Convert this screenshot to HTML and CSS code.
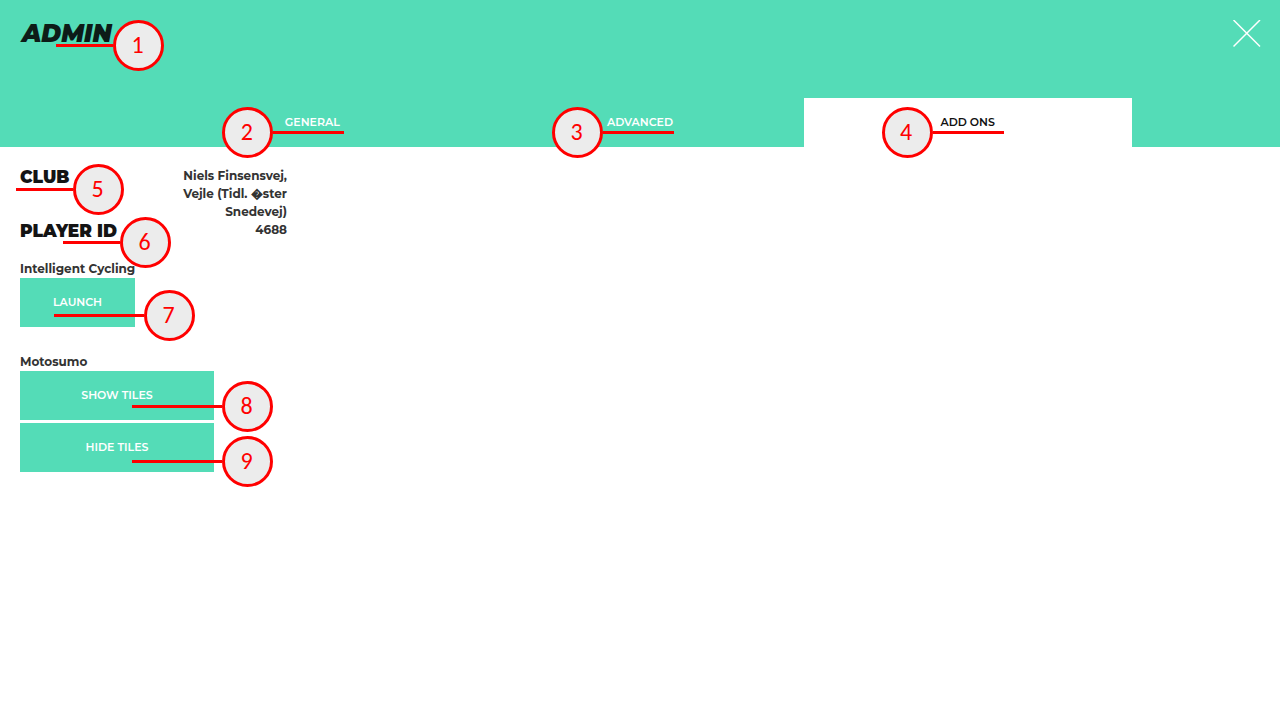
FILE: index.html
```html
<!DOCTYPE html>
<html lang="en">
<head>
<meta charset="utf-8">
<meta name="viewport" content="width=device-width, initial-scale=1">
<title>Admin</title>
<link rel="stylesheet" href="styles.css">
</head>
<body>
<header class="header">
  <div class="title-bar">
    <div class="anchor">
      <h1 class="title">ADMIN</h1>
      <span class="callout callout-title"><span class="number">1</span></span>
    </div>
    <button class="close" type="button" aria-label="Close">
      <svg class="close-icon" viewBox="0 0 28 28" aria-hidden="true"><path d="M0.5 0 27 26.500M27 0 0.5 26.500" fill="none" stroke="#fff" stroke-width="1.5"/></svg>
    </button>
  </div>
  <nav class="tabs">
    <div class="anchor">
      <button class="tab" type="button">GENERAL</button>
      <span class="callout callout-tab callout-general"><span class="number">2</span></span>
    </div>
    <div class="anchor">
      <button class="tab" type="button">ADVANCED</button>
      <span class="callout callout-tab callout-advanced"><span class="number">3</span></span>
    </div>
    <div class="anchor">
      <button class="tab tab-active" type="button" aria-current="page">ADD ONS</button>
      <span class="callout callout-tab callout-addons"><span class="number">4</span></span>
    </div>
  </nav>
</header>
<main class="content">
  <dl class="details">
    <div class="detail anchor">
      <dt class="detail-name">CLUB</dt>
      <dd class="detail-value">Niels Finsensvej,<br>Vejle (Tidl. &#xFFFD;ster<br>Snedevej)</dd>
      <span class="callout callout-club"><span class="number">5</span></span>
    </div>
    <div class="detail anchor">
      <dt class="detail-name">PLAYER ID</dt>
      <dd class="detail-value">4688</dd>
      <span class="callout callout-player"><span class="number">6</span></span>
    </div>
  </dl>
  <section class="addon">
    <h2 class="addon-name">Intelligent Cycling</h2>
    <div class="anchor">
      <button class="action action-launch" type="button">LAUNCH</button>
      <span class="callout callout-action callout-launch"><span class="number">7</span></span>
    </div>
  </section>
  <section class="addon">
    <h2 class="addon-name">Motosumo</h2>
    <div class="actions">
      <div class="anchor">
        <button class="action" type="button">SHOW TILES</button>
        <span class="callout callout-action callout-show"><span class="number">8</span></span>
      </div>
      <div class="anchor">
        <button class="action" type="button">HIDE TILES</button>
        <span class="callout callout-action callout-hide"><span class="number">9</span></span>
      </div>
    </div>
  </section>
</main>
</body>
</html>
```
FILE: styles.css
```css
* { box-sizing: border-box; }

body {
  margin: 0;
  background: #fff;
  color: #333;
  font: 700 12px/18px Montserrat, Inter, sans-serif;
}

h1, h2, dl, dd { margin: 0; }

button {
  border: 0;
  padding: 0;
  font: inherit;
  cursor: pointer;
}

.anchor { position: relative; }

.header {
  display: flex;
  flex-direction: column;
  background: #54dcb7;
}

.title-bar {
  display: flex;
  justify-content: space-between;
  align-items: flex-start;
  min-height: 98px;
  padding: 20px 19px 0 20px;
}

.title {
  padding: 0 0 0 2px;
  color: #0d1c18;
  font-size: 24px;
  font-weight: 900;
  font-style: italic;
  line-height: 27px;
}

.close {
  display: flex;
  background: none;
}

.close-icon {
  width: 28px;
  height: 28px;
}

.tabs {
  display: grid;
  grid-template-columns: repeat(3, 1fr);
  width: 76.8%;
  margin: 0 auto;
}

.tab {
  width: 100%;
  height: 49px;
  padding-bottom: 2px;
  background: none;
  color: #fff;
  font-size: 11px;
  font-weight: 600;
}

.tab-active {
  background: #fff;
  color: #111;
}

.content { padding: 19px 20px; }

.details { width: 267px; }

.detail {
  display: flex;
  justify-content: space-between;
  height: 54px;
}

.detail-name {
  color: #141414;
  font-size: 17px;
  font-weight: 900;
  line-height: 22px;
}

.detail-value {
  padding-top: 1px;
  text-align: right;
}

.detail:last-child { height: 39px; }

.addon {
  width: 194px;
  margin-bottom: 25px;
}

.addon-name {
  font: inherit;
  padding-top: 1px;
  white-space: nowrap;
}

.actions {
  display: grid;
  gap: 3px;
}

.action {
  display: block;
  width: 100%;
  height: 49px;
  padding-bottom: 2px;
  background: #54dcb7;
  color: #fff;
  font-size: 11px;
  font-weight: 600;
}

.action-launch { width: 115px; }

/* Numbered markers laid over the interface */
.callout {
  position: absolute;
  z-index: 1;
  display: flex;
  align-items: center;
  pointer-events: none;
}

.callout::before {
  content: "";
  width: 57px;
  height: 3px;
  background: #f00;
}

.number {
  width: 51px;
  height: 51px;
  padding-right: 2px;
  border: 3px solid #f00;
  border-radius: 50%;
  background: #ececec;
  color: #f00;
  font: 400 24px/44px Carlito, Lato, sans-serif;
  text-align: center;
}

.callout-title { left: 36px; top: 0; }

.callout-tab {
  top: 9px;
  flex-direction: row-reverse;
}

.callout-tab::before { width: 71px; }

.callout-general { left: calc(50% - 90px); }
.callout-advanced { left: calc(50% - 88px); }
.callout-addons { left: calc(50% - 86px); }

.callout-club { left: -4px; top: -2px; }
.callout-player { left: 43px; top: -3px; }

.callout-action::before { width: 90px; }

.callout-launch { left: 34px; top: 12px; }
.callout-show { left: 112px; top: 10px; }
.callout-hide { left: 112px; top: 13px; }
```
